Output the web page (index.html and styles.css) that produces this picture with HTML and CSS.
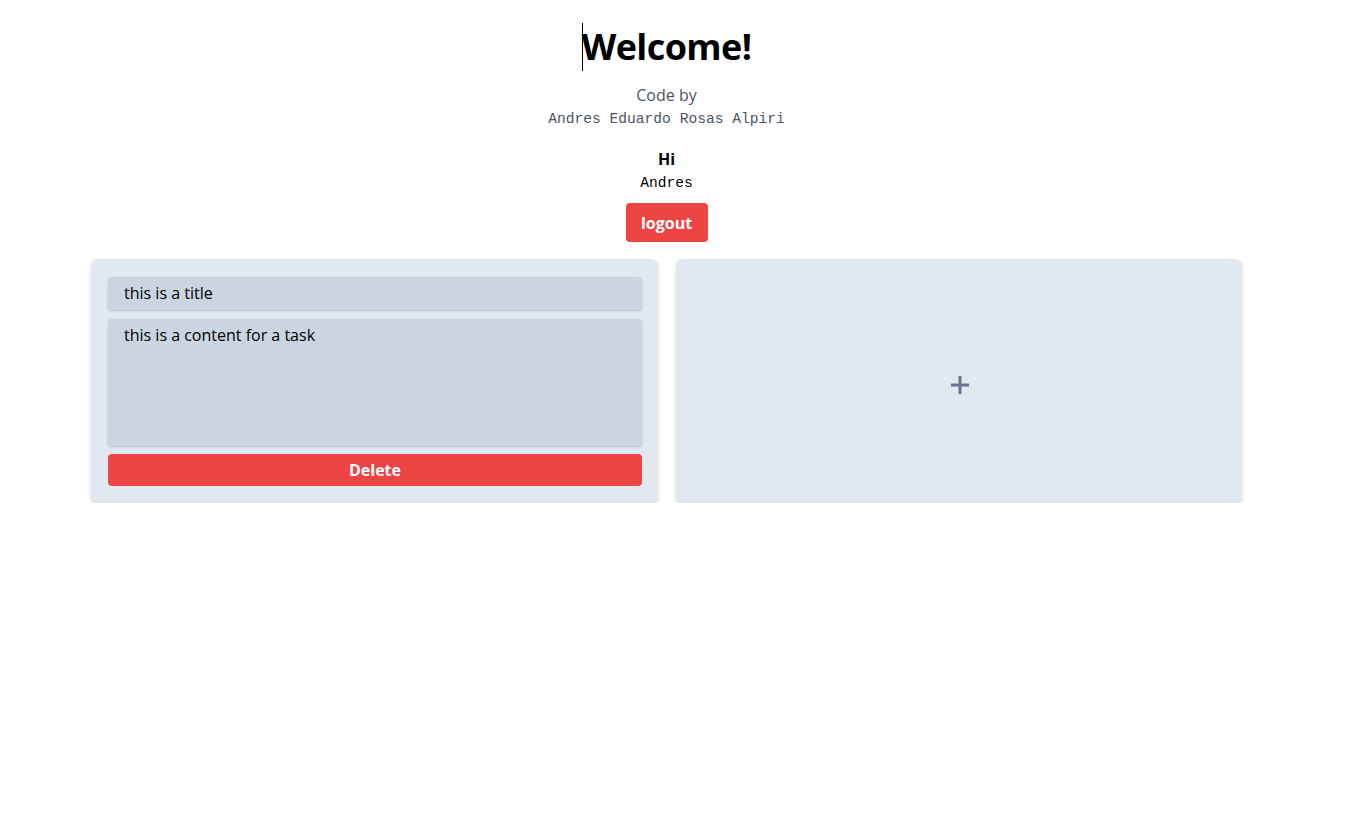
FILE: index.html
```html
<!DOCTYPE html>
<html>
<head>
<meta charset="utf-8">
<link rel="stylesheet" href="styles.css">
</head>
<body>
<div class="page">
  <header class="header">
    <h1 class="title"><span class="caret"></span>Welcome!</h1>
    <p class="byline">Code by</p>
    <p class="mono author">Andres Eduardo Rosas Alpiri</p>
    <p class="hi">Hi</p>
    <p class="mono user">Andres</p>
    <button class="btn logout">logout</button>
  </header>
  <main class="grid">
    <section class="card">
      <div class="field title-field">this is a title</div>
      <div class="field content-field">this is a content for a task</div>
      <button class="btn delete">Delete</button>
    </section>
    <section class="card add">
      <svg class="plus" width="18" height="18" viewBox="0 0 18 18" aria-label="add">
        <path d="M9 0V18M0 9H18" stroke="#64748b" stroke-width="3" fill="none"/>
      </svg>
    </section>
  </main>
</div>
</body>
</html>
```
FILE: styles.css
```css
* { box-sizing: border-box; }
html, body { margin: 0; padding: 0; background: #fff; }
body {
  font-family: "Open Sans", "Noto Sans", sans-serif;
  color: #000;
}
.page {
  width: 1333px;
  display: flex;
  flex-direction: column;
  align-items: center;
}
.header {
  display: flex;
  flex-direction: column;
  align-items: center;
  padding-top: 23px;
}
.title {
  position: relative;
  margin: 0;
  font-size: 36px;
  line-height: 48px;
  font-weight: 700;
  letter-spacing: -0.6px;
}
.caret {
  position: absolute;
  left: 0;
  top: 0;
  width: 1px;
  height: 48px;
  background: #000;
}
.byline {
  margin: 12px 0 0;
  font-size: 16px;
  line-height: 24px;
  color: #4b5563;
}
.mono {
  font-family: "Liberation Mono", monospace;
  font-size: 14.6px;
  line-height: 24px;
  margin: 0;
}
.author { color: #4b5563; }
.hi {
  margin: 16px 0 0;
  font-size: 16px;
  line-height: 24px;
  font-weight: 700;
}
.user { color: #000; }
.btn {
  border: 0;
  border-radius: 4px;
  background: #ef4444;
  color: #fff;
  font-family: inherit;
  font-weight: 700;
  font-size: 16px;
  cursor: pointer;
}
.logout {
  margin-top: 8px;
  width: 82px;
  height: 39px;
  padding: 0;
}
.grid {
  margin-top: 17px;
  width: 1151px;
  display: grid;
  grid-template-columns: 567px 566px;
  gap: 18px;
}
.card {
  background: #e2e8f0;
  border-radius: 6px;
  box-shadow: 0 3px 5px rgba(0,0,0,0.12), 0 1px 2px rgba(0,0,0,0.06);
  padding: 18px 16px 17px 17px;
  height: 244px;
  display: flex;
  flex-direction: column;
}
.field {
  background: #cbd5e1;
  border-radius: 4px;
  box-shadow: 0 1px 3px rgba(0,0,0,0.12), 0 1px 2px rgba(0,0,0,0.06);
  padding: 0 16px;
  font-size: 16px;
  font-weight: 500;
  color: #000;
}
.title-field {
  height: 33px;
  line-height: 33px;
}
.content-field {
  margin-top: 9px;
  height: 127px;
  padding-top: 4px;
  line-height: 24px;
}
.delete {
  margin-top: 8px;
  height: 32px;
  width: 100%;
}
.add {
  align-items: center;
  justify-content: center;
}
.plus {
  display: block;
  margin-left: 1px;
  margin-top: 6px;
}
```
